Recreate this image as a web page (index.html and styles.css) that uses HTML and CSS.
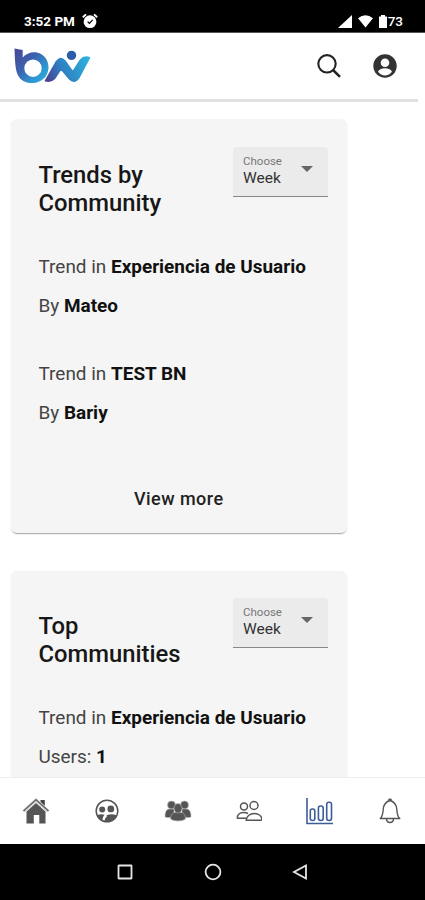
FILE: index.html
```
<!DOCTYPE html>
<html lang="en">
<head>
<meta charset="utf-8">
<title>Trends</title>
<link rel="stylesheet" href="styles.css">
</head>
<body>
<div class="phone">
  <div class="status">
    <span class="clock">3:52 PM</span>
    <svg class="alarm" width="16" height="16" viewBox="0 0 16 16"><circle cx="8" cy="8.700" r="6.400" fill="#fff"/><path d="M.8 4.200 4 1.400M15.200 4.200 12 1.400" stroke="#fff" stroke-width="1.900"/><path d="M5.600 8.600 7.400 10.300 10.600 6.800" fill="none" stroke="#000" stroke-width="1.200"/></svg>
    <span class="spacer"></span>
    <svg class="signal" width="14" height="13" viewBox="0 0 14 13"><path d="M14 0v13H0z" fill="#fff"/></svg>
    <svg class="wifi" width="15" height="13" viewBox="0 0 15 13"><path d="M0 3.200Q7.500-2.600 15 3.200L7.500 12.500z" fill="#fff"/></svg>
    <svg class="battery" width="8" height="13" viewBox="0 0 8 13"><path d="M0 1.500h2V0h4v1.500h2V13H0z" fill="#fff"/></svg>
    <span class="percent">73</span>
  </div>
  <header class="header">
    <svg class="logo" width="77" height="36" viewBox="0 0 77 36">
      <defs>
        <linearGradient id="gb" x1="0" y1="0" x2="1" y2="1"><stop offset="0" stop-color="#4a4595"/><stop offset=".4" stop-color="#3c62ae"/><stop offset=".75" stop-color="#2d9bd2"/><stop offset="1" stop-color="#2eb0dc"/></linearGradient>
        <linearGradient id="gn" gradientUnits="userSpaceOnUse" x1="32" y1="30" x2="76" y2="10"><stop offset="0" stop-color="#4b3f92"/><stop offset=".35" stop-color="#307dc0"/><stop offset="1" stop-color="#2cb5de"/></linearGradient>
      </defs>
      <path d="M.5.500 8.700 2V9.500C13 4.300 21 2.500 27 6c8 4.500 9.500 15 5 22-6 9-21 9.500-27 1C1.500 24 1 16 .5.500zM19 11.500a8.700 8.700 0 1 0 0 17.400 8.700 8.700 0 0 0 0-17.400z" fill="url(#gb)" fill-rule="evenodd"/>
      <path d="M31.500 32.800 42.500 13.500Q46.500 7.800 51 13L58.800 24 66.500 12Q70 7.800 75.500 9.700L65 29.500Q60.500 36 55.500 31L47 20.800 40.500 30.500Q37 34.300 31.500 32.800z" fill="url(#gn)" stroke="url(#gn)" stroke-width="1.600" stroke-linejoin="round"/>
      <circle cx="57.500" cy="7.400" r="4.700" fill="#2c5da8"/>
    </svg>
    <span class="spacer"></span>
    <svg class="search" width="26" height="26" viewBox="0 0 26 26"><circle cx="11" cy="10.800" r="8.700" fill="none" stroke="#222" stroke-width="2.100"/><path d="M17 17 24 23.800" stroke="#222" stroke-width="2.500"/></svg>
    <svg class="account" width="24" height="24" viewBox="0 0 24 24"><circle cx="12" cy="12" r="11.700" fill="#333"/><circle cx="12" cy="8.800" r="4.300" fill="#fff"/><path d="M5 17.600c1.500-2.500 4-3.400 7-3.400s5.500.9 7 3.400c-1.500 2.700-4.500 4-7 4s-5.500-1.300-7-4z" fill="#fff"/></svg>
  </header>
  <main class="content">
    <section class="card">
      <div class="card-head">
        <h2>Trends by<br>Community</h2>
        <div class="select">
          <div><div class="label">Choose</div><div class="value">Week</div></div>
          <i class="arrow"></i>
        </div>
      </div>
      <p class="row">Trend in <b>Experiencia de Usuario</b></p>
      <p class="row">By <b>Mateo</b></p>
      <p class="row next">Trend in <b>TEST BN</b></p>
      <p class="row">By <b>Bariy</b></p>
      <div class="more">View more</div>
    </section>
    <section class="card">
      <div class="card-head">
        <h2>Top<br>Communities</h2>
        <div class="select">
          <div><div class="label">Choose</div><div class="value">Week</div></div>
          <i class="arrow"></i>
        </div>
      </div>
      <p class="row">Trend in <b>Experiencia de Usuario</b></p>
      <p class="row">Users: <b>1</b></p>
    </section>
  </main>
  <nav class="tabs">
    <svg width="28" height="28" viewBox="0 0 28 28"><path d="M18.500 3h4.300v7h-4.300z" fill="#444"/><path d="M4.500 14.500 14 6 23.500 14.500V26.500h-6.200v-8.500h-5.500v8.500H4.500z" fill="#555"/><path d="M1.500 14.500 14 3.200 26.500 14.500" fill="none" stroke="#ddd" stroke-width="3.600"/><path d="M1.500 14 14 2.700 26.500 14" fill="none" stroke="#666" stroke-width="1.500"/></svg>
    <svg width="28" height="28" viewBox="0 0 28 28"><circle cx="14" cy="14" r="10.800" fill="#fff" stroke="#555" stroke-width="1.500"/><circle cx="9.200" cy="12.600" r="3" fill="#555"/><circle cx="17.800" cy="11.900" r="3.400" fill="#555"/><path d="M4 18q4-1.500 7.500-.3-2 2-2.200 5.700Q5.500 21.500 4 18zM11.500 24.500q0-3.500 2.200-4.800v-1.500q5-2.200 10.300.3-2.500 5.500-9.500 6z" fill="#555"/></svg>
    <svg width="28" height="28" viewBox="0 0 28 28"><g fill="#555" stroke="#bbb" stroke-width=".6"><circle cx="7.500" cy="8" r="4"/><circle cx="20.500" cy="8" r="4"/><path d="M1 19.500c0-5 1.500-7.500 5-7.500h4v8.500H2z"/><path d="M27 19.500c0-5-1.500-7.500-5-7.500h-4v8.500h8z"/><path d="M6.500 22c.3-5 2.500-7 7.500-7s7.200 2 7.500 7c-3 2.600-12 2.600-15 0z"/><ellipse cx="14" cy="11.300" rx="4" ry="4.700"/></g></svg>
    <svg width="28" height="28" viewBox="0 0 28 28"><g fill="none" stroke="#555" stroke-width="1.500"><circle cx="10" cy="9.600" r="3.500"/><circle cx="20" cy="8.500" r="4"/><path d="M12.500 21.300H3.500c-.8-3.800 2.500-5.800 6-5.800 1.800 0 3.200.3 4.500 1"/><path d="M12.200 23.200h16c-.3-4.200-3.700-6.700-7.900-6.700s-7.800 2.500-8.100 6.700z"/></g></svg>
    <svg width="28" height="28" viewBox="0 0 28 28"><g fill="none" stroke="#3d5d99" stroke-width="1.600"><path d="M2 1v25.500h26"/><rect x="5.300" y="12" width="4.500" height="11.500" rx="2"/><rect x="13.400" y="9" width="4.800" height="14.500" rx="2.200"/><rect x="21.700" y="5.300" width="4.800" height="18.200" rx="2.200"/></g></svg>
    <svg width="28" height="28" viewBox="0 0 28 28"><g fill="none" stroke="#555" stroke-width="1.400" stroke-linejoin="round"><path d="M4.200 21.500c2.600-2.200 2.700-5.500 3-9C7.500 8 9.700 4.700 14 3.500c4.300 1.200 6.500 4.500 6.800 9 .3 3.500.4 6.800 3 9z"/><path d="M12.500 3.800c0-2.500 3-2.500 3 0M10.500 21.800c0 5 7 5 7 0"/></g></svg>
  </nav>
  <div class="system">
    <svg width="16" height="16" viewBox="0 0 16 16"><rect x="1.500" y="1.500" width="13" height="13" rx=".5" fill="none" stroke="#e6e6e6" stroke-width="1.800"/></svg>
    <svg width="18" height="18" viewBox="0 0 18 18"><circle cx="9" cy="9" r="7.400" fill="none" stroke="#e6e6e6" stroke-width="1.800"/></svg>
    <svg width="16" height="16" viewBox="0 0 16 16"><path d="M14 1.500v13L2 8z" fill="none" stroke="#e6e6e6" stroke-width="1.800"/></svg>
  </div>
</div>
</body>
</html>
```
FILE: styles.css
```
* { box-sizing: border-box; }
body { margin: 0; background: #fff; font-family: Roboto, "Liberation Sans", sans-serif; }
svg { display: block; flex: none; }
h2, p { margin: 0; }
.phone { width: 425px; height: 900px; display: flex; flex-direction: column; overflow: hidden; }
.spacer { flex: 1; }

.status { flex: none; height: 33px; background: #000; color: #fff; display: flex; align-items: center; padding: 10px 22px 0 24px; border-bottom: 1px solid #555; font-size: 13.5px; font-weight: 700; }
.alarm { margin-left: 7px; margin-top: -1px; }
.wifi { margin-left: 6px; }
.battery { margin-left: 6px; }
.percent { font-size: 13.5px; font-weight: 500; margin-left: .5px; }

.header { flex: none; width: 418px; height: 69px; display: flex; align-items: center; padding: 0 21px 0 14px; border-bottom: 3px solid #e0e0e0; }
.search { margin-right: 31px; }

.content { flex: 1; min-height: 0; overflow: hidden; padding: 17px 0 0 11px; }
.card { width: 336px; height: 414px; background: #f5f5f5; border-radius: 6px; padding: 28px 19px 0 27.5px; margin-bottom: 38px; box-shadow: 0 2px 1px -1px #aaa, 0 1px 2px rgba(0,0,0,.1); }
.card + .card { padding-top: 27px; }
.card-head { display: flex; justify-content: space-between; height: 99px; }
h2 { font-size: 23.8px; line-height: 28.500px; font-weight: 500; color: #171717; padding-top: 13.5px; white-space: nowrap; }
.select { width: 95px; height: 50px; background: #ebebeb; border-bottom: 1px solid #888; border-radius: 4px 4px 0 0; display: flex; justify-content: space-between; padding: 8px 15px 0 10px; }
.label { font-size: 11.5px; line-height: 13px; color: #777; }
.value { font-size: 15.5px; line-height: 21px; color: #333; }
.arrow { width: 0; height: 0; border: 6px solid transparent; border-top-color: #666; border-bottom: 0; margin-top: 11px; }
.row { font-size: 18.95px; line-height: 39px; color: #444; padding-top: 1px; height: 39px; white-space: nowrap; }
.row b { color: #111; font-weight: 700; }
.next { margin-top: 29px; }
.more { margin-top: 56px; text-align: center; padding-right: 9px; font-size: 18px; letter-spacing: .45px; line-height: 24px; font-weight: 500; color: #222; }

.tabs { flex: none; height: 67px; border-top: 1px solid #eee; display: flex; justify-content: space-between; align-items: center; padding: 0 21px 0 22px; }
.system { flex: none; height: 56px; background: #000; display: flex; align-items: center; justify-content: space-between; padding: 0 117px; }
```
